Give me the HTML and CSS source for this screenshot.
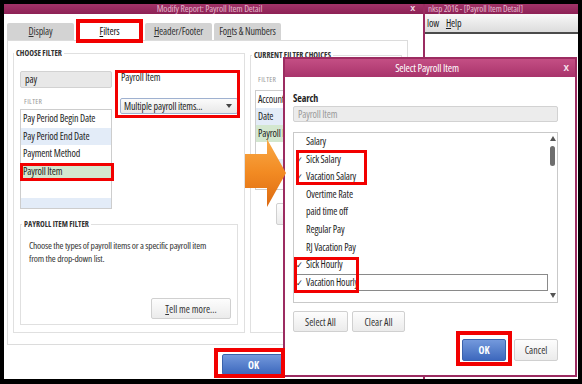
FILE: index.html
```html
<!DOCTYPE html>
<html lang="en">
<head>
    <meta charset="UTF-8">
    <meta name="viewport" content="width=device-width, initial-scale=1.0">
    <title>Modify Report: Payroll Item Detail</title>
    <link rel="stylesheet" href="styles.css">
</head>
<body>
    <div class="screen">

        <!-- main app window peeking out on the right -->
        <div class="win main-win">
            <div class="titlebar main-title">nksp 2016 - [Payroll Item Detail]</div>
            <div class="menubar"><span>low</span><span><u>H</u>elp</span></div>
        </div>

        <!-- Modify Report dialog -->
        <div class="win modify">
            <div class="titlebar modify-title">
                <span></span>
                <span>Modify Report: Payroll Item Detail</span>
                <span class="close">x</span>
            </div>
            <div class="modify-body">
                <div class="tabs">
                    <div class="tab"><u>D</u>isplay</div>
                    <div class="tab active"><u>F</u>ilters</div>
                    <div class="tab"><u>H</u>eader/Footer</div>
                    <div class="tab">Fo<u>n</u>ts &amp; Numbers</div>
                </div>

                <div class="tab-panel">
                    <fieldset class="group choose">
                        <legend>CHOOSE FILTER</legend>
                        <div class="choose-top">
                            <div class="filter-col">
                                <div class="textbox">pay</div>
                                <div class="caption">FILTER</div>
                                <ul class="list filter-list">
                                    <li>Pay Period Begin Date</li>
                                    <li class="alt">Pay Period End Date</li>
                                    <li>Payment Method</li>
                                    <li class="sel">Payroll Item</li>
                                    <li></li>
                                    <li class="alt"></li>
                                </ul>
                            </div>
                            <div class="value-col">
                                <div class="value-label">Payroll Item</div>
                                <div class="dropdown">Multiple payroll items...<span class="caret"></span></div>
                            </div>
                        </div>

                        <fieldset class="group item-filter">
                            <legend>PAYROLL ITEM FILTER</legend>
                            <p>Choose the types of payroll items or a specific payroll item from the drop-down list.</p>
                            <div class="btn-row"><button class="btn btn-more"><u>T</u>ell me more...</button></div>
                        </fieldset>
                    </fieldset>

                    <fieldset class="group current">
                        <legend>CURRENT FILTER CHOICES</legend>
                        <div class="caption">FILTER</div>
                        <ul class="list current-list">
                            <li>Account</li>
                            <li class="alt">Date</li>
                            <li class="sel">Payroll Item</li>
                            <li></li>
                            <li class="alt"></li>
                            <li></li>
                        </ul>
                        <!-- label is hidden behind the popup -->
                        <button class="btn btn-remove" aria-label="Remove Selected Filter"></button>
                    </fieldset>
                </div>

                <div class="footer">
                    <button class="btn btn-primary">OK</button>
                    <button class="btn btn-wide" aria-label="Cancel"></button>
                    <button class="btn btn-wide" aria-label="Help"></button>
                </div>
            </div>
        </div>

        <!-- Select Payroll Item popup -->
        <div class="win picker">
            <div class="titlebar picker-title">
                <span></span>
                <span>Select Payroll Item</span>
                <span class="close">x</span>
            </div>
            <div class="picker-body">
                <div class="search-label">Search</div>
                <div class="textbox search-box">Payroll Item</div>

                <div class="item-list">
                    <ul class="items">
                        <li><span class="check"></span>Salary</li>
                        <li><span class="check">✓</span>Sick Salary</li>
                        <li><span class="check">✓</span>Vacation Salary</li>
                        <li><span class="check"></span>Overtime Rate</li>
                        <li><span class="check"></span>paid time off</li>
                        <li><span class="check"></span>Regular Pay</li>
                        <li><span class="check"></span>RJ Vacation Pay</li>
                        <li><span class="check">✓</span>Sick Hourly</li>
                        <li class="focus"><span class="check">✓</span>Vacation Hourly</li>
                    </ul>
                    <div class="scrollbar">
                        <span class="arrow-up"></span>
                        <span class="thumb"></span>
                        <span class="arrow-down"></span>
                    </div>
                </div>

                <div class="picker-actions">
                    <button class="btn btn-select">Select All</button>
                    <button class="btn btn-clear">Clear All</button>
                </div>
                <div class="picker-footer">
                    <button class="btn btn-primary btn-small">OK</button>
                    <button class="btn btn-small">Cancel</button>
                </div>
            </div>
        </div>

        <!-- orange pointer between the two dialogs -->
        <svg class="pointer" width="42" height="68" viewBox="0 0 42 68">
            <defs>
                <linearGradient id="orange" x1="0" y1="0" x2="0" y2="1">
                    <stop offset="0" stop-color="#f9aa48"/>
                    <stop offset="0.5" stop-color="#f28a22"/>
                    <stop offset="1" stop-color="#dc6a12"/>
                </linearGradient>
            </defs>
            <path d="M0 15 H22 V0 L41 34 L22 68 V49 H0 Z" fill="url(#orange)"/>
        </svg>

        <!-- red highlight boxes -->
        <div class="mark mark-tab"></div>
        <div class="mark mark-row"></div>
        <div class="mark mark-value"></div>
        <div class="mark mark-ok"></div>
        <div class="mark mark-salary"></div>
        <div class="mark mark-hourly"></div>
        <div class="mark mark-picker-ok"></div>
    </div>
</body>
</html>
```
FILE: styles.css
```css
* {
    box-sizing: border-box;
}

body {
    margin: 0;
    background: #000;
    font-family: "Open Sans", "Roboto Condensed", sans-serif;
    font-stretch: condensed;
    font-size: 10px;
    letter-spacing: -0.15px;
    color: #1e1e1e;
}

.screen {
    position: relative;
    margin: 4px;
    width: 574px;
    height: 375px;
    overflow: hidden;
}

/* windows sit on the desktop at their own places */
.win {
    position: absolute;
    background: #fff;
}

.titlebar {
    background: linear-gradient(to bottom, #ab3b71, #8d2155);
    white-space: nowrap;
    overflow: hidden;
}

.close {
    font-family: "Liberation Sans", sans-serif;
    font-weight: bold;
    text-align: right;
}

/* ---------- main window ---------- */

.main-win {
    left: 421px;
    top: -4px;
    width: 153px;
    height: 383px;
}

.main-title {
    height: 14px;
    padding: 4px 0 0 3px;
    font-size: 9px;
    line-height: 9px;
    color: #e6bcd0;
}

.menubar {
    height: 20px;
    display: flex;
    align-items: center;
    gap: 7px;
    padding-left: 2px;
    background: linear-gradient(to bottom, #f8f8f8, #dcdcdc);
    border-bottom: 2px solid #4b4b4b;
    color: #1d1d1d;
}

/* ---------- modify report dialog ---------- */

.modify {
    left: 0;
    top: -4px;
    width: 421px;
    height: 383px;
    border-right: 2px solid #9b2c61;
}

.modify-title {
    height: 14px;
    display: grid;
    grid-template-columns: 30px 1fr 30px;
    padding: 4px 8px 0 0;
    font-size: 9.5px;
    line-height: 9px;
    color: #e3b5cb;
    text-align: center;
}

.modify-title .close {
    color: #f3dbe6;
    font-size: 9px;
}

.modify-body {
    padding: 9px 0 0 3px;
}

.tabs {
    display: flex;
    gap: 2px;
    height: 17px;
}

.tab {
    width: 67px;
    background: #d3d3d3;
    border-radius: 2px 2px 0 0;
    text-align: center;
    line-height: 17px;
    white-space: nowrap;
    color: #333;
}

.tab.active {
    background: #fff;
    color: #111;
}

.tab-panel {
    width: 401px;
    height: 305px;
    display: flex;
    align-items: flex-start;
    gap: 5px;
    padding: 7px 5px 0;
    border: 1px solid #dcdcdc;
}

.group {
    margin: 0;
    min-width: 0;
    border: 1px solid #e0e0e0;
}

.group legend {
    padding: 0 2px;
    font-size: 8px;
    line-height: 10px;
    font-weight: bold;
    letter-spacing: 0;
    color: #333;
}

.choose {
    width: 232px;
    padding: 13px 6px 7px;
}

.choose legend {
    margin-left: -6px;
}

.choose-top {
    display: flex;
    gap: 8px;
}

.filter-col {
    width: 92px;
}

.textbox {
    height: 17px;
    padding-left: 4px;
    line-height: 15px;
    background: #e8e8e8;
    border: 1px solid #d2d2d2;
    border-radius: 2px;
}

.caption {
    margin: 8px 0 3px 4px;
    font-size: 7.5px;
    line-height: 10px;
    letter-spacing: 0.3px;
    color: #9a9a9a;
}

.list {
    margin: 0;
    padding: 0;
    list-style: none;
    height: 100px;
    overflow: hidden;
    background: #fff;
    border: 1px solid #cdcdcd;
}

.list li {
    height: 17.5px;
    line-height: 17.5px;
    padding-left: 2px;
    white-space: nowrap;
}

.list .alt {
    background: #e3ecf8;
}

.list .sel {
    background: #d3e7cf;
}

.value-col {
    width: 118px;
}

.value-label {
    line-height: 12px;
    padding-left: 1px;
}

.dropdown {
    margin-top: 15px;
    height: 16px;
    display: flex;
    align-items: center;
    justify-content: space-between;
    padding: 0 5px 0 3px;
    background: linear-gradient(to bottom, #fbfbfb, #e8e8e8);
    border: 1px solid #9fb1d0;
    border-radius: 2px;
}

.caret {
    border-top: 4px solid #444;
    border-left: 3px solid transparent;
    border-right: 3px solid transparent;
}

.item-filter {
    margin-top: 10px;
    padding: 10px 6px 5px 8px;
}

.item-filter legend {
    margin-left: -7px;
}

.item-filter p {
    max-width: 190px;
    margin: 0;
    font-size: 9.5px;
    line-height: 13px;
    letter-spacing: -0.2px;
    color: #333;
}

.btn-row {
    display: flex;
    justify-content: flex-end;
    margin-top: 33px;
}

.btn {
    height: 21px;
    padding: 0;
    font: inherit;
    color: #333;
    background: linear-gradient(to bottom, #fdfdfd, #ebebeb);
    border: 1px solid #d0d0d0;
    border-radius: 2px;
}

.btn-more {
    width: 80px;
}

.current {
    flex: 1;
    margin-top: 2px;
    height: 283px;
    padding: 14px 4px 0;
}

.current legend {
    margin-left: -3px;
}

.current .caption {
    margin: 0 0 6px 3px;
}

.current-list li {
    height: 17px;
    line-height: 17px;
}

.btn-remove {
    display: block;
    width: 100px;
    height: 22px;
    margin: 13px auto 0;
}

.footer {
    display: flex;
    gap: 6px;
    padding: 9px 0 0 215px;
}

.btn-primary {
    width: 63px;
    color: #fff;
    font-weight: bold;
    background: linear-gradient(to bottom, #7399dc, #3d68bd);
    border-color: #3a62ab;
}

.btn-wide {
    width: 63px;
}

/* ---------- select payroll item popup ---------- */

.picker {
    left: 279px;
    top: 53px;
    width: 294px;
    height: 320px;
    border: 2px solid #9c2c61;
}

.picker-title {
    height: 18px;
    display: grid;
    grid-template-columns: 30px 1fr 30px;
    padding-right: 6px;
    background: linear-gradient(to bottom, #c44f84, #a8346b);
    color: #fff;
    font-size: 10.5px;
    line-height: 18px;
    text-align: center;
}

.picker-title .close {
    font-size: 10px;
    color: #f6e3ec;
}

.picker-body {
    padding: 15px 17px 0 8px;
}

.search-label {
    font-weight: bold;
    line-height: 12px;
    color: #1f1f1f;
}

.search-box {
    margin-top: 2px;
    height: 16px;
    line-height: 14px;
    color: #9a9a9a;
    background: #ececec;
}

.item-list {
    margin-top: 10px;
    height: 171px;
    display: flex;
    border: 1px solid #c9c9c9;
}

.items {
    flex: 1;
    margin: 0;
    padding: 0;
    list-style: none;
}

.items li {
    height: 17.6px;
    line-height: 17.6px;
    padding-left: 2px;
    white-space: nowrap;
}

.items .focus {
    outline: 1px solid #8a8a8a;
    outline-offset: -1px;
}

.check {
    display: inline-block;
    width: 10px;
    font-family: "DejaVu Sans", sans-serif;
    font-size: 9px;
}

.scrollbar {
    width: 9px;
    display: flex;
    flex-direction: column;
    align-items: center;
    padding: 3px 0 4px;
}

.arrow-up {
    border-bottom: 5px solid #555;
    border-left: 3px solid transparent;
    border-right: 3px solid transparent;
}

.thumb {
    width: 5px;
    height: 20px;
    margin-top: 5px;
    background: #6e6e6e;
    border-radius: 3px;
}

.arrow-down {
    margin-top: auto;
    border-top: 5px solid #555;
    border-left: 3px solid transparent;
    border-right: 3px solid transparent;
}

.picker-actions {
    display: flex;
    gap: 4px;
    margin-top: 8px;
}

.btn-select {
    width: 55px;
}

.btn-clear {
    width: 53px;
}

.picker-footer {
    display: flex;
    justify-content: flex-end;
    gap: 8px;
    margin-top: 7px;
}

.btn-small {
    width: 44px;
    height: 22px;
}

/* ---------- annotations ---------- */

.pointer {
    position: absolute;
    left: 241px;
    top: 135px;
}

.mark {
    position: absolute;
    border: 3px solid #f20000;
}

.mark-tab {
    left: 72px;
    top: 15px;
    width: 67px;
    height: 24px;
    border-width: 4px;
}

.mark-row {
    left: 16px;
    top: 159px;
    width: 94px;
    height: 18px;
}

.mark-value {
    left: 111px;
    top: 66px;
    width: 125px;
    height: 48px;
}

.mark-ok {
    left: 210px;
    top: 344px;
    width: 71px;
    height: 30px;
    border-width: 4px;
}

.mark-salary {
    left: 292px;
    top: 146px;
    width: 71px;
    height: 35px;
}

.mark-hourly {
    left: 290px;
    top: 253px;
    width: 65px;
    height: 36px;
}

.mark-picker-ok {
    left: 452px;
    top: 327px;
    width: 56px;
    height: 35px;
    border-width: 4px;
}
```
